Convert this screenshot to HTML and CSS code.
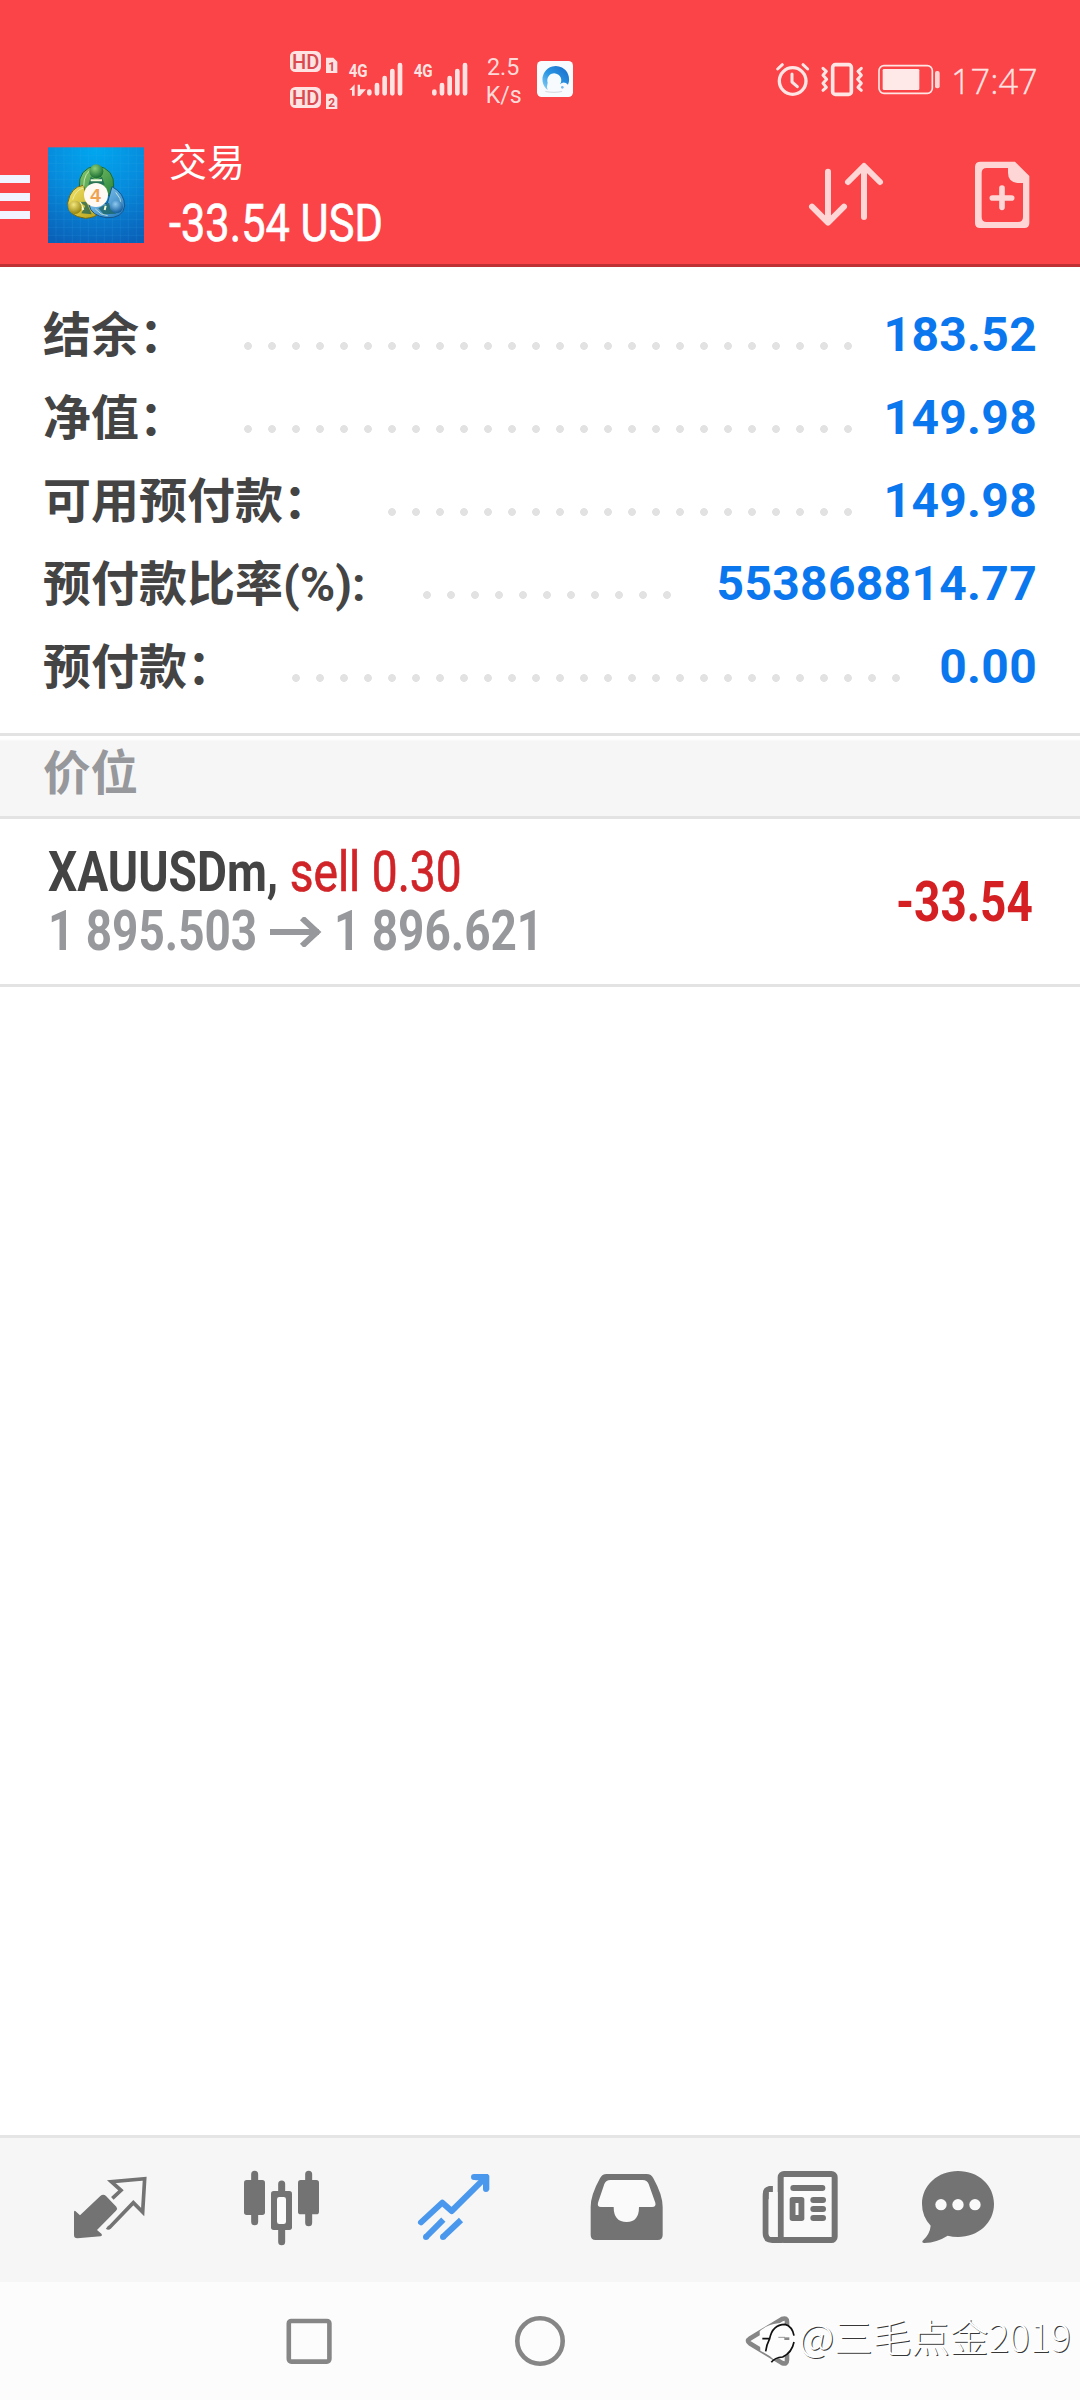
FILE: index.html
```html
<!DOCTYPE html>
<html lang="zh-CN">
<head>
<meta charset="utf-8">
<title>交易</title>
<link rel="stylesheet" href="styles.css">
</head>
<body>
<div class="screen">
  <header class="top">
    <div class="status">
      <svg class="status-group" viewBox="0 0 990 300">
        <g fill="#ffe3e2">
          <rect x="60" y="63" width="93" height="63" rx="16"/>
          <rect x="60" y="171" width="93" height="63" rx="16"/>
          <path d="M168 83h22l12 12v34h-34zM168 191h22l12 12v34h-34z"/>
        </g>
        <g class="hd-text">
          <text x="66" y="116" textLength="82" lengthAdjust="spacingAndGlyphs">HD</text>
          <text x="66" y="224" textLength="82" lengthAdjust="spacingAndGlyphs">HD</text>
        </g>
        <g class="sim-text"><text x="175" y="123">1</text><text x="175" y="231">2</text></g>
        <g class="net-text">
          <text x="236" y="142" textLength="57" lengthAdjust="spacingAndGlyphs">4G</text>
          <text x="431" y="142" textLength="57" lengthAdjust="spacingAndGlyphs">4G</text>
        </g>
        <g stroke="#ffe3e2" stroke-width="14" stroke-linecap="round">
          <path d="M298 185v5M321 165v25M344 144v46M367 123v67M390 105v85"/>
          <path d="M493 185v5M516 165v25M539 144v46M562 123v67M585 105v85"/>
        </g>
        <path d="M238 180l16-17v34h-8v-17zM263 164h7v14h18l-18 20h-7z" fill="#ffe3e2"/>
        <g class="rate-text">
          <text x="651" y="136" textLength="97" lengthAdjust="spacingAndGlyphs">2.5</text>
          <text x="647" y="219" textLength="108" lengthAdjust="spacingAndGlyphs">K/s</text>
        </g>
        <defs>
          <linearGradient id="ring" x1="0" y1="1" x2="1" y2="0"><stop offset="0" stop-color="#8fd4f6"/><stop offset=".45" stop-color="#2b97e4"/><stop offset="1" stop-color="#1769c8"/></linearGradient>
        </defs>
        <rect x="801" y="93" width="108" height="108" rx="14" fill="#f8fbfe"/>
        <path d="M833 180A40 40 0 1 1 894 164q-12-12-24-1A21 21 0 1 0 833 158q-4 12 0 22z" fill="url(#ring)"/>
        <circle cx="877" cy="172" r="4" fill="#7ab9ed"/>
        <path d="M826 184q26 6 50 0" fill="none" stroke="#d9dee5" stroke-width="4"/>
      </svg>
      <svg class="status-group" viewBox="0 0 990 300">
        <g fill="none" stroke="#ffe5e4" stroke-linecap="round" stroke-linejoin="round">
          <circle cx="128" cy="153" r="40" stroke-width="10"/>
          <path d="M126 132v24l16 14M83 117l14-13M173 117l-14-13" stroke-width="9"/>
          <rect x="248" y="104" width="56" height="89" rx="8" stroke-width="11"/>
          <path d="M219 115l10 9-10 12 11 12-11 12 10 12-10 9M334 115l-10 9 10 12-11 12 11 12-10 12 10 9" stroke-width="9"/>
          <rect x="387" y="107" width="160" height="83" rx="15" stroke-width="5"/>
        </g>
        <rect x="398" y="117" width="110" height="63" rx="4" fill="#ffe9e8"/>
        <rect x="555" y="123" width="14" height="52" rx="6" fill="#ffd5d4"/>
        <text class="clock" x="603" y="191" textLength="260" lengthAdjust="spacingAndGlyphs">17:47</text>
      </svg>
    </div>
    <div class="appbar">
      <svg class="brand" viewBox="0 0 480 402">
        <defs>
          <radialGradient id="sky" cx=".5" cy="0" r="1.05"><stop offset="0" stop-color="#00a8f0"/><stop offset=".5" stop-color="#078bdc"/><stop offset="1" stop-color="#0a61b8"/></radialGradient>
          <linearGradient id="green" x1="0" y1="0" x2="1" y2="1"><stop offset="0" stop-color="#8ccb70"/><stop offset="1" stop-color="#278439"/></linearGradient>
          <linearGradient id="gold" x1="0" y1="0" x2="1" y2="1"><stop offset="0" stop-color="#f4e468"/><stop offset="1" stop-color="#b7a017"/></linearGradient>
          <linearGradient id="blue" x1="0" y1="0" x2="1" y2="1"><stop offset="0" stop-color="#9bd4f4"/><stop offset="1" stop-color="#1c76bd"/></linearGradient>
          <radialGradient id="ballg" cx=".4" cy=".3" r=".7"><stop offset="0" stop-color="#8ed078"/><stop offset="1" stop-color="#176b31"/></radialGradient>
          <radialGradient id="bally" cx=".4" cy=".3" r=".7"><stop offset="0" stop-color="#f3e67c"/><stop offset="1" stop-color="#94840e"/></radialGradient>
          <radialGradient id="ballb" cx=".4" cy=".3" r=".7"><stop offset="0" stop-color="#8dcaf0"/><stop offset="1" stop-color="#135d9f"/></radialGradient>
        </defs>
        <path d="M0 135h90v24H0zM0 189h90v24H0zM0 243h90v24H0z" fill="#f1f3ff"/>
        <rect x="144" y="52" width="288" height="287" fill="url(#sky)"/>
        <path d="M168 52v287M192 52v287M217 52v287M241 52v287M265 52v287M289 52v287M313 52v287M337 52v287M361 52v287M385 52v287M409 52v287M144 76h288M144 100h288M144 124h288M144 148h288M144 172h288M144 196h288M144 220h288M144 244h288M144 268h288M144 292h288M144 316h288" stroke="#45b9f0" stroke-opacity=".2" stroke-width="2"/>
        <path d="M238 172q-4-56 51-65 56 9 52 65l-16 26h-70z" fill="url(#green)" stroke="#176b35" stroke-width="3"/>
        <path d="M250 166q-38 4-47 53-2 39 53 46 28-2 42-15l-30-30z" fill="url(#gold)" stroke="#716914" stroke-width="3"/>
        <path d="M336 170q38 20 38 58-5 38-56 35-44-6-51-38l55-5z" fill="url(#blue)" stroke="#14568f" stroke-width="3"/>
        <path d="M251 170q0-45 31-55M218 209q9-30 33-35M347 187q17 17 17 40M286 237q16 19 37 20" fill="none" stroke="#e9f6cf" stroke-opacity=".7" stroke-width="3"/>
        <path d="M272 140l17 11 17-11 8 24h-49zM239 216l17 12-12 22 31 3-16-38zM327 218l5 20 17 13-38 2-16-18z" fill="#145e56" fill-opacity=".7"/>
        <path d="M272 151h34M240 217l10 23M317 227l-3 13" stroke="#effad9" stroke-width="6"/>
        <circle cx="289" cy="124" r="21" fill="url(#ballg)"/>
        <circle cx="225" cy="232" r="20" fill="url(#bally)"/>
        <circle cx="350" cy="230" r="19" fill="url(#ballb)"/>
        <circle cx="288" cy="195" r="36" fill="#fff9f3"/>
        <text class="badge-four" x="271" y="216">4</text>
      </svg>
      <div class="heading">
        <div class="title">交易</div>
        <div class="profit"><span class="condensed">-33.54 USD</span></div>
      </div>
      <svg class="actions" viewBox="0 0 900 402">
        <g fill="none" stroke="#ffd6d6" stroke-linecap="round" stroke-linejoin="round" stroke-width="18">
          <path d="M144 125v151M96 230l48 48 48-48M252 261V110M204 156l48-48 48 48"/>
          <path d="M666 174v58M637 204h58" stroke-width="17"/>
        </g>
        <path fill="#ffd6d6" fill-rule="evenodd" d="M602 95h103l43 43v141q0 15-15 15H600q-15 0-15-15V111q0-16 17-16zM620 114q-15 0-15 15v132q0 15 15 15h94q15 0 15-15V159h-17q-28-4-28-31v-14z"/>
      </svg>
    </div>
  </header>

  <main class="content">
    <section class="account">
      <div class="row"><span class="label">结余：</span><i class="dots"></i><span class="value">183.52</span></div>
      <div class="row"><span class="label">净值：</span><i class="dots"></i><span class="value">149.98</span></div>
      <div class="row"><span class="label">可用预付款：</span><i class="dots"></i><span class="value">149.98</span></div>
      <div class="row"><span class="label">预付款比率(%):</span><i class="dots"></i><span class="value">553868814.77</span></div>
      <div class="row"><span class="label">预付款：</span><i class="dots"></i><span class="value">0.00</span></div>
    </section>
    <h2 class="section-title">价位</h2>
    <section class="position">
      <div class="deal">
        <div class="line symbol"><span class="condensed"><b>XAUUSDm,</b> <span class="sell">sell 0.30</span></span></div>
        <div class="line prices">
          <span class="price"><span class="condensed">1 895.503</span></span>
          <svg class="arrow" viewBox="0 0 52 30"><path d="M0 15h49M32 1l15 14-15 14" fill="none" stroke="#97989b" stroke-width="6"/></svg>
          <span class="price"><span class="condensed">1 896.621</span></span>
        </div>
      </div>
      <div class="loss"><span class="condensed">-33.54</span></div>
    </section>
  </main>

  <nav class="tabs">
    <svg class="tab" viewBox="-48 54 516 432">
      <path d="M106 273l14 13 61-58q9-7 17 0l31 32q5 6-1 12l-57 58 14 12q3 5-3 7l-70 6q-10 0-10-10v-69q1-5 4-3z" fill="#737373"/>
      <path d="M217 235l26-24-29-26 100-9-6 100-28-28-70 73q-5 4-9 1" fill="none" stroke="#737373" stroke-width="11"/>
    </svg>
    <svg class="tab" viewBox="468 54 516 432">
      <path d="M644 163v142M806 163v145M725 192v30M725 325v40" stroke="#737373" stroke-width="21" stroke-linecap="round"/>
      <rect x="612" y="180" width="63" height="105" rx="8" fill="#737373"/>
      <rect x="774" y="180" width="63" height="103" rx="8" fill="#737373"/>
      <rect x="693" y="213" width="63" height="117" rx="8" fill="#737373"/>
      <rect x="711" y="231" width="27" height="81" rx="7" fill="#fbfbfb"/>
    </svg>
    <svg class="tab" viewBox="984 54 516 432">
      <g fill="none" stroke="#4a98ee" stroke-width="18">
        <path d="M1143 307l64-59 28 25 98-97" stroke-linecap="round" stroke-linejoin="round"/>
        <path d="M1302 171h36v36" stroke-linecap="round" stroke-linejoin="round"/>
        <path d="M1158 351l52-52M1209 351l54-51"/>
      </g>
      <path d="M1306 162h37l5 5v42h-18v-28h-24z" fill="#4a98ee"/>
      <circle cx="1158" cy="351" r="9" fill="#4a98ee"/><circle cx="1209" cy="351" r="9" fill="#4a98ee"/>
    </svg>
    <svg class="tab" viewBox="-60 54 516 432">
      <path fill="#737373" d="M140 162h120q14 0 20 13 28 50 28 86v84q0 15-15 15H107q-15 0-15-15v-84q0-36 28-86 6-13 20-13z"/>
      <path fill="#fafafa" d="M151 180h97q13 0 18 12l20 56q3 13-10 13h-39q0 45-37 45-39 0-39-45h-38q-12 0-9-13l19-56q5-12 18-12z"/>
    </svg>
    <svg class="tab" viewBox="456 54 516 432">
      <rect x="662" y="162" width="162" height="198" rx="10" fill="#fafafa" stroke="#737373" stroke-width="18"/>
      <path d="M638 207q-21 0-21 21v112q0 20 20 20h30" fill="none" stroke="#737373" stroke-width="18"/>
      <path d="M700 204h87M760 240h29M760 267h29M760 294h29" stroke="#737373" stroke-width="18" stroke-linecap="round"/>
      <rect x="689" y="231" width="44" height="72" rx="8" fill="#737373"/>
      <path d="M711 249v36" stroke="#fafafa" stroke-width="9"/>
      <path d="M626 216h27v135h-17q-10 0-10-10z" fill="#f8f8f8"/>
      <path d="M626 216h12v-18h-10q-19 4-19 20v20h17z" fill="#737373"/>
    </svg>
    <svg class="tab" viewBox="972 54 516 432">
      <path fill="#737373" d="M1194 153c61 0 108 42 108 99s-48 99-108 99q-16 0-31-4-31 20-70 22-9-1-5-7 22-20 24-45-26-28-26-65c0-57 48-99 108-99z"/>
      <g fill="#fafafa"><circle cx="1143" cy="254" r="17"/><circle cx="1194" cy="254" r="17"/><circle cx="1245" cy="254" r="17"/></g>
    </svg>
  </nav>

  <footer class="navbar">
    <svg viewBox="0 0 52 52"><rect x="5.8" y="6" width="40.6" height="40.6" rx="2.5" fill="none" stroke="#868686" stroke-width="4.6"/></svg>
    <svg viewBox="0 0 52 52"><circle cx="26" cy="26" r="22.7" fill="none" stroke="#868686" stroke-width="4.6"/></svg>
    <svg viewBox="0 0 52 52"><path d="M5 23.5L37 4q5-2 5 3v38q0 5-5 3L5 28.5q-4-2.5 0-5z" fill="none" stroke="#868686" stroke-width="4.6"/></svg>
    <div class="watermark">
      <svg viewBox="0 0 180 240">
        <path d="M62 94q22-20 56-24 32-2 48 28l4 30q-4 26-26 38l-38 14-14-12-28-16z" fill="#fdfdfd"/>
        <path d="M70 116h22q8-42 46-43 22 6 27 34M92 116q-10 20-12 38M165 126q-6 32-34 45-24 2-34 16" fill="none" stroke="#101010" stroke-width="5"/>
        <path d="M118 112h20" stroke="#999" stroke-width="3"/><path d="M136 116h15" stroke="#888" stroke-width="8"/>
      </svg>
      <span>@三毛点金2019</span>
    </div>
  </footer>
</div>
</body>
</html>
```
FILE: styles.css
```css
* { box-sizing: border-box; }
body { margin: 0; background: #fff; font-family: Roboto, "Noto Sans CJK SC", sans-serif; }
svg { display: block; flex: none; }

.screen { width: 1080px; height: 2400px; display: flex; flex-direction: column; overflow: hidden; }

.top { background: #fa4447; border-bottom: 3px solid #bd3034; }
.status { height: 130px; padding: 30px 0 0 270px; display: flex; gap: 150px; }
.status-group { width: 330px; height: 100px; }
.hd-text { font: 500 60px Roboto, sans-serif; fill: #d94b50; }
.sim-text { font: 700 36px Roboto, sans-serif; fill: #d94b50; }
.net-text { font: 700 54px Roboto, sans-serif; fill: #ffe3e2; }
.rate-text { font: 400 73px Roboto, sans-serif; fill: #ffd9d8; }
.clock { font: 300 106px "Open Sans", "Noto Sans", sans-serif; fill: #ffe3e2; stroke: #ffe3e2; stroke-width: 1px; }

.appbar { height: 134px; display: flex; }
.brand { width: 160px; height: 134px; }
.badge-four { font: 700 57px "Liberation Sans", sans-serif; fill: #eda352; }
.heading { flex: 1; padding-left: 9px; color: #fff; }
.title { margin-top: 8px; font-size: 38px; line-height: 50px; }
.profit { margin-top: 4px; font-size: 51px; line-height: 64px; }
.actions { width: 300px; height: 134px; }

.condensed { display: inline-block; white-space: pre; transform: scaleX(.835); transform-origin: left center; }
.profit .condensed { transform: scaleX(.85); -webkit-text-stroke: .7px currentColor; }

.content { flex: 1; }
.account { height: 466px; padding: 26px 43px 0; }
.row { height: 83px; display: flex; align-items: center; font-size: 48px; font-weight: 700; line-height: 83px; white-space: nowrap; }
.label { color: #444; padding-top: 1px; }
.dots { flex: 1; height: 8px; margin: 22px 16px 0 49px; }
/* only whole 24px steps, so that no dot is cut */
.dots::before { content: ""; display: block; height: 8px; width: 100%; width: round(down, 100%, 24px); background: radial-gradient(circle at center, #e2e2e2 3.5px, transparent 4.3px) left center / 24px 8px repeat-x; }
.value { color: #0a77ef; letter-spacing: .3px; }

.section-title { margin: 0; height: 86px; padding-left: 43px; border-top: 3px solid #e3e3e3; border-bottom: 3px solid #e3e3e3; background: linear-gradient(#fff 3px, #f6f6f6 5px); color: #97989b; font-size: 47.5px; font-weight: 700; line-height: 76px; }

.position { height: 168px; border-bottom: 3px solid #e3e3e3; padding: 24px 49px 0 48px; display: flex; font-size: 55px; }
.deal { flex: 1; }
.line { height: 59px; line-height: 59px; white-space: nowrap; }
.symbol { color: #444; }
.symbol .condensed { transform: scaleX(.838); }
.sell { color: #d02428; -webkit-text-stroke: .7px currentColor; }
.prices { display: flex; align-items: center; color: #97989b; font-weight: 700; }
.price { width: 208px; }
.arrow { width: 52px; height: 30px; margin: 0 12px 0 14px; }
.loss { width: 135px; line-height: 118px; color: #d42022; font-weight: 700; }

.tabs { height: 147px; display: flex; padding-left: 24px; background: #f6f6f6; border-top: 3px solid #e5e5e5; }
.tab { width: 172px; height: 144px; }

.navbar { position: relative; height: 118px; background: #fcfcfc; display: flex; align-items: center; justify-content: center; gap: 179px; }
.navbar > svg { width: 52px; height: 52px; }
.watermark { position: absolute; left: 739px; top: 18px; display: flex; font: 300 38.6px/71px "Noto Sans CJK SC", sans-serif; color: #fff; text-shadow: 1px 1px 0 rgba(0, 0, 0, .8); white-space: nowrap; }
.watermark svg { width: 60px; height: 80px; }
```
